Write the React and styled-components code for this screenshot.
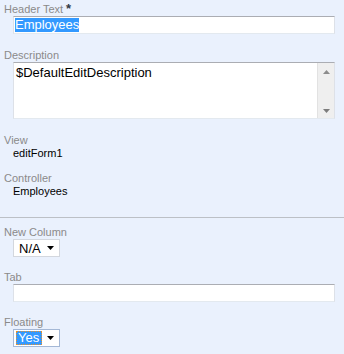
import React from "react";
import styled, { createGlobalStyle } from "styled-components";

const Global = createGlobalStyle`
  html, body { margin: 0; padding: 0; }
  body {
    background: #eaf1fd;
    font-family: "Liberation Sans", Arial, sans-serif;
  }
`;

const Form = styled.div`
  display: flex;
  flex-direction: column;
  padding-top: 3px;
  width: 344px;
  min-height: 354px;
  box-sizing: border-box;
`;

const Field = styled.div`
  display: flex;
  flex-direction: column;
  margin-top: ${(p) => p.$top || 0}px;
`;

const Label = styled.div`
  padding-left: 4px;
  font-size: 11px;
  line-height: 13px;
  height: 13px;
  color: #8a8a8a;
  white-space: nowrap;
`;

const Required = styled.span`
  margin-left: 3px;
  font-size: 13px;
  font-weight: bold;
  line-height: 11px;
  vertical-align: top;
  color: #333a44;
`;

const Value = styled.div`
  padding-left: 13px;
  font-size: 11px;
  line-height: 13px;
  color: #000;
`;

const TextBox = styled.div`
  margin: 0 9px 0 13px;
  height: 18px;
  box-sizing: border-box;
  background: #fff;
  border: 1px solid #dde1e8;
  border-top-color: #abadb3;
  border-bottom-color: #e3e9ef;
  padding-left: 1px;
  display: flex;
  align-items: center;
  font-size: 13px;
  color: #000;
`;

const Highlight = styled.span`
  background: #3399ff;
  color: #fff;
  line-height: 14px;
  height: 14px;
  white-space: nowrap;
`;

const AreaBox = styled.div`
  margin: 0 9px 0 13px;
  height: 57px;
  box-sizing: border-box;
  background: #fff;
  border: 1px solid #dde1e8;
  border-top-color: #abadb3;
  border-bottom-color: #e3e9ef;
  display: flex;
`;

const AreaText = styled.div`
  flex: 1;
  padding: 2px 0 0 2px;
  font-size: 13px;
  line-height: 16px;
  color: #000;
`;

const ScrollTrack = styled.div`
  width: 16px;
  background: #efefef;
  border-left: 1px solid #e2e2e2;
  display: flex;
  flex-direction: column;
  justify-content: space-between;
  align-items: center;
  padding: 7px 0 5px;
`;

const Separator = styled.div`
  margin-top: 19px;
  height: 1px;
  background: #bcc0c6;
`;

const Select = styled.div`
  margin-left: 13px;
  width: 47px;
  height: 18px;
  box-sizing: border-box;
  background: #fff;
  border: 1px solid ${(p) => (p.$focused ? "#a4b8d6" : "#d3d7de")};
  display: flex;
  align-items: center;
  justify-content: space-between;
  padding: 0 5px 0 ${(p) => (p.$focused ? 2 : 5)}px;
  font-size: 13px;
  color: #000;
`;

const FocusText = styled.span`
  background: #3399ff;
  color: #fff;
  border: 1px dotted #e8912c;
  padding: 0 0 0 1px;
  height: 14px;
  line-height: 12px;
  box-sizing: border-box;
  width: 26px;
`;

const Arrow = ({ dir = "down", color = "#000" }) => (
  <svg width="7" height="4" viewBox="0 0 7 4" style={{ display: "block" }}>
    {dir === "down" ? (
      <polygon points="0,0 7,0 3.5,4" fill={color} />
    ) : (
      <polygon points="0,4 7,4 3.5,0" fill={color} />
    )}
  </svg>
);

export default function App() {
  return (
    <>
      <Global />
      <Form>
        <Field>
          <Label>
            Header Text<Required>*</Required>
          </Label>
          <TextBox>
            <Highlight>Employees</Highlight>
          </TextBox>
        </Field>

        <Field $top={15}>
          <Label>Description</Label>
          <AreaBox>
            <AreaText>$DefaultEditDescription</AreaText>
            <ScrollTrack>
              <Arrow dir="up" color="#8c8c8c" />
              <Arrow dir="down" color="#7c7c7c" />
            </ScrollTrack>
          </AreaBox>
        </Field>

        <Field $top={15}>
          <Label>View</Label>
          <Value>editForm1</Value>
        </Field>

        <Field $top={12}>
          <Label>Controller</Label>
          <Value>Employees</Value>
        </Field>

        <Separator />

        <Field $top={8}>
          <Label>New Column</Label>
          <Select>
            <span>N/A</span>
            <Arrow />
          </Select>
        </Field>

        <Field $top={14}>
          <Label>Tab</Label>
          <TextBox />
        </Field>

        <Field $top={14}>
          <Label>Floating</Label>
          <Select $focused>
            <FocusText>Yes</FocusText>
            <Arrow />
          </Select>
        </Field>
      </Form>
    </>
  );
}
